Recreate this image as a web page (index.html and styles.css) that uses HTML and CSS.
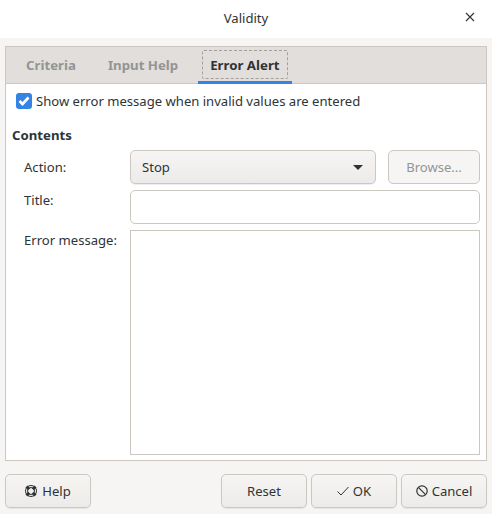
FILE: index.html
```html
<!DOCTYPE html>
<html>
<head>
    <title>Validity</title>
    <link rel="stylesheet" href="styles.css">
</head>
<body>
    <header class="titlebar">
        <span class="title">Validity</span>
        <svg class="close" width="10" height="10" viewBox="0 0 10 10"><path d="M1 1l8 8M9 1l-8 8" stroke="#2e3436" stroke-width="1.1" fill="none"/></svg>
    </header>

    <div class="dialog">
        <div class="notebook">
            <div class="tabs">
                <div class="tab">Criteria</div>
                <div class="tab">Input Help</div>
                <div class="tab active"><span class="focus">Error Alert</span></div>
            </div>
            <div class="page">
                <label class="check">
                    <span class="box">
                        <svg width="16" height="16" viewBox="0 0 16 16"><path d="M3.5 8l3 3 6-6.5" stroke="#fff" stroke-width="2.6" fill="none"/></svg>
                    </span>
                    Show error message when invalid values are entered
                </label>
                <h4 class="heading">Contents</h4>
                <div class="form">
                    <div class="label label-mid">Action:</div>
                    <div class="action-row">
                        <div class="btn combo">
                            <span>Stop</span>
                            <span class="arrow"></span>
                        </div>
                        <div class="btn browse">Browse...</div>
                    </div>
                    <div class="label">Title:</div>
                    <div class="entry"></div>
                    <div class="label">Error message:</div>
                    <div class="textarea"></div>
                </div>
            </div>
        </div>

        <div class="buttons">
            <div class="btn action help">
                <svg width="12" height="12" viewBox="0 0 12 12"><circle cx="6" cy="6" r="3.5" fill="none" stroke="#2e3436" stroke-width="1"/><circle cx="6" cy="6" r="5.5" fill="none" stroke="#2e3436" stroke-width="1"/><path d="M1.5 1.5l2.7 2.7M10.5 1.5L7.8 4.2M1.5 10.5l2.7-2.7M10.5 10.5L7.8 7.8" stroke="#2e3436" stroke-width="3"/></svg>
                <span>Help</span>
            </div>
            <div class="spacer"></div>
            <div class="btn action">Reset</div>
            <div class="btn action">
                <svg width="12" height="12" viewBox="0 0 12 12"><path d="M0.5 6.5l3.5 3.5 7.5-8" stroke="#2e3436" stroke-width="1" fill="none"/></svg>
                <span>OK</span>
            </div>
            <div class="btn action">
                <svg width="12" height="12" viewBox="0 0 12 12"><circle cx="6" cy="6" r="5.2" fill="none" stroke="#2e3436" stroke-width="1.2"/><path d="M2.4 2.4l7.2 7.2" stroke="#2e3436" stroke-width="1.2"/></svg>
                <span>Cancel</span>
            </div>
        </div>
    </div>
</body>
</html>
```

FILE: styles.css
```css
html, body {
    height: 100%;
}

body {
    margin: 0;
    font-family: "Noto Sans", sans-serif;
    font-size: 13.08px;
    color: #2e3436;
    background-color: #f6f5f4;
    display: flex;
    flex-direction: column;
}

.titlebar {
    height: 38px;
    background-color: #fff;
    display: flex;
    align-items: center;
    justify-content: center;
    position: relative;
}

.title {
    margin-top: -2px;
}

.close {
    position: absolute;
    right: 17px;
    top: 12px;
}

.dialog {
    flex: 1;
    padding: 8px 5px 6px;
    display: flex;
    flex-direction: column;
}

.notebook {
    height: 415px;
    box-sizing: border-box;
    border: 1px solid #cdc7c2;
    background-color: #fff;
    display: flex;
    flex-direction: column;
}

.tabs {
    height: 37px;
    box-sizing: border-box;
    flex-shrink: 0;
    background-color: #e1dedb;
    border-bottom: 1px solid #cdc7c2;
    display: flex;
    padding-left: 8px;
    gap: 8px;
}

.tab {
    font-size: 13.25px;
    font-weight: 700;
    color: #929595;
    padding: 0 12px 1px;
    display: flex;
    align-items: center;
    box-sizing: border-box;
    height: 37px;
}

.tab.active {
    color: #2e3436;
    padding: 4px 4px 3px;
    border-bottom: 3px solid #3584e4;
}

.focus {
    border: 1px dashed #a3a09c;
    border-radius: 2px;
    padding: 0 7px;
    height: 29px;
    box-sizing: border-box;
    display: flex;
    align-items: center;
}

.page {
    flex: 1;
    padding: 9px 6px 5px;
    display: flex;
    flex-direction: column;
}

.check {
    display: flex;
    align-items: center;
    gap: 4px;
    margin-left: 4px;
    height: 16px;
}

.box {
    width: 16px;
    height: 16px;
    border-radius: 3px;
    background-color: #3584e4;
    display: block;
}

.box svg {
    display: block;
}

.heading {
    margin: 17px 0 6px;
    font-size: 13.2px;
    line-height: 18px;
    font-weight: 700;
}

.form {
    flex: 1;
    display: grid;
    grid-template-columns: 118px 1fr;
    grid-template-rows: 34px 34px 1fr;
    row-gap: 6px;
}

.label {
    padding-left: 12px;
    padding-top: 1px;
    line-height: 18px;
}

.label-mid {
    padding-top: 8px;
}

.action-row {
    display: flex;
    gap: 12px;
}

.btn {
    box-sizing: border-box;
    height: 34px;
    border: 1px solid #cdc7c2;
    border-radius: 5px;
    background: linear-gradient(#f6f5f4, #edebe9);
    box-shadow: 0 1px 1px rgba(0, 0, 0, 0.07);
    display: flex;
    align-items: center;
}

.combo {
    flex: 1;
    justify-content: space-between;
    padding: 0 12px 0 11px;
}

.arrow {
    width: 0;
    height: 0;
    border-left: 5px solid transparent;
    border-right: 5px solid transparent;
    border-top: 5px solid #2e3436;
}

.browse {
    width: 92px;
    justify-content: center;
    color: #929595;
    background: #f6f5f4;
    box-shadow: none;
}

.entry {
    border: 1px solid #cdc7c2;
    border-radius: 5px;
    background-color: #fff;
}

.textarea {
    border: 1px solid #cdc7c2;
    background-color: #fff;
}

.buttons {
    margin-top: 13px;
    display: flex;
    gap: 4px;
}

.spacer {
    flex: 1;
}

.action {
    width: 86px;
    justify-content: center;
    gap: 4px;
}

.help {
    gap: 5px;
}
```
